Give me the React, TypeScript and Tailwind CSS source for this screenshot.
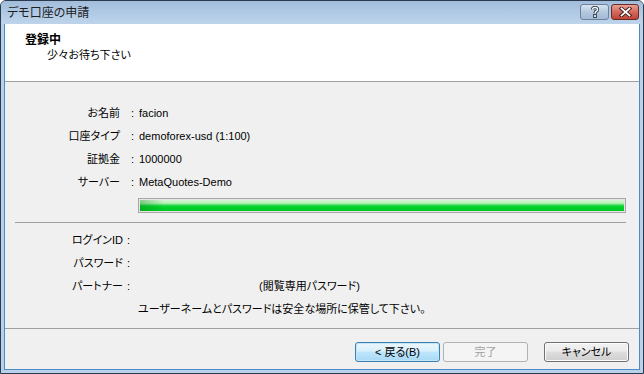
const FONT = '"Liberation Sans", "Noto Sans CJK JP", sans-serif';

function Row({ label, value, colonAt = "upper" }: { label: string; value?: React.ReactNode; colonAt?: "upper" | "lower" }) {
  return (
    <div className="flex h-[23px] items-center whitespace-nowrap leading-[23px]">
      <div className={colonAt === "upper" ? "w-[115px] shrink-0 text-right" : "w-[118px] shrink-0 text-right"}>{label}</div>
      <div className={colonAt === "upper" ? "w-[14px] shrink-0 text-right" : "w-[7px] shrink-0 text-right"}>:</div>
      <div className={colonAt === "upper" ? "w-[5px] shrink-0" : "w-[9px] shrink-0"} />
      <div className="flex-1">{value}</div>
    </div>
  );
}

function WinButton({ children, variant = "normal" }: { children: React.ReactNode; variant?: "default" | "normal" | "disabled" }) {
  const cls =
    variant === "default"
      ? "border-[#3c7fb1] bg-[linear-gradient(#eaf6fd_0%,#d9f0fc_45%,#bee6fd_50%,#a7d9f5_100%)] text-black shadow-[inset_0_0_0_1px_#c4e5f6]"
      : variant === "disabled"
        ? "border-[#adb2b5] bg-[#f4f4f4] text-[#a0a0a0]"
        : "border-[#707070] bg-[linear-gradient(#f2f2f2_0%,#ebebeb_45%,#dddddd_50%,#cfcfcf_100%)] text-black shadow-[inset_0_0_0_1px_#fcfcfc]";
  return (
    <div className={`flex h-[20px] w-[85px] items-center justify-center rounded-[3px] border text-[11px] ${cls}`}>
      {children}
    </div>
  );
}

export default function App() {
  return (
    <div
      className="flex h-[374px] w-[644px] flex-col overflow-hidden rounded-t-[6px] border border-[#2b3a4c] bg-[#b9d1ea] text-[11px] text-black"
      style={{ fontFamily: FONT, fontFeatureSettings: '"palt"' }}
    >
      {/* title bar */}
      <div className="flex h-[23px] shrink-0 items-center bg-[linear-gradient(#a2bddb,#b3cbe5_60%,#bdd4eb)] pl-[6px] pr-[4px]">
        <span className="text-[12px] leading-none text-[#1e1e1e]">デモ口座の申請</span>
        <div className="ml-auto mt-[-1px] flex gap-[2px]">
          <div className="flex h-[16px] w-[29px] items-center justify-center rounded-[3px] border border-[#6e8198] bg-[linear-gradient(#d7e4f2,#b4c8df_50%,#a3bad6)]">
            <svg width="10" height="12" viewBox="0 0 10 12">
              <path d="M2.5 3.5 Q2.5 1.5 5 1.5 Q7.5 1.5 7.5 3.5 Q7.5 5 5.5 5.8 L5 7.5" fill="none" stroke="#2e3b4a" strokeWidth="3.2" />
              <path d="M2.5 3.5 Q2.5 1.5 5 1.5 Q7.5 1.5 7.5 3.5 Q7.5 5 5.5 5.8 L5 7.5" fill="none" stroke="#fff" strokeWidth="1.4" />
              <rect x="3.6" y="8.6" width="2.8" height="2.8" fill="#fff" stroke="#2e3b4a" strokeWidth="1" />
            </svg>
          </div>
          <div className="flex h-[16px] w-[28px] items-center justify-center rounded-[3px] border border-[#6b2a24] bg-[linear-gradient(#e6a094,#d4685b_50%,#c2443a)]">
            <svg width="13" height="10" viewBox="0 0 13 10">
              <path d="M2.5 1.5 L10.5 8.5 M10.5 1.5 L2.5 8.5" stroke="#3a1512" strokeWidth="3.6" strokeLinecap="square" />
              <path d="M2.5 1.5 L10.5 8.5 M10.5 1.5 L2.5 8.5" stroke="#fff" strokeWidth="1.8" strokeLinecap="square" />
            </svg>
          </div>
        </div>
      </div>

      {/* client area */}
      <div className="mx-[3px] mb-[3px] flex flex-1 flex-col border-x border-b border-[#4a8cc4] bg-[#f0f0f0]">
        {/* header */}
        <div className="h-[58px] shrink-0 border-b border-[#a0a0a0] bg-white pl-[20px] pt-[9px]">
          <div className="h-[15px] text-[12px] font-bold leading-[15px]">登録中</div>
          <div className="h-[15px] pl-[22px] leading-[15px]">少々お待ち下さい</div>
        </div>

        {/* body */}
        <div className="flex flex-1 flex-col pt-[20px]">
          <Row label="お名前" value="facion" />
          <Row label="口座タイプ" value="demoforex-usd (1:100)" />
          <Row label="証拠金" value="1000000" />
          <Row label="サーバー" value="MetaQuotes-Demo" />

          <div className="ml-[133px] mt-[4px] h-[15px] w-[488px] border border-[#a7a7a7] bg-[#e6e6e6] p-px">
            <div className="h-full w-full bg-[linear-gradient(#d6f7d6_0%,#b4efb4_30%,#3ddf5a_45%,#00d42a_60%,#00c826_100%)]">
              <div className="h-full w-[24px] bg-[linear-gradient(90deg,rgba(0,120,20,0.35),rgba(0,120,20,0))]" />
            </div>
          </div>

          <div className="ml-[10px] mt-[9px] h-px w-[611px] bg-[#a0a0a0]" />

          <div className="mt-[6px]">
            <Row label="ログインID" colonAt="lower" />
            <Row label="パスワード" colonAt="lower" />
            <Row label="パートナー" colonAt="lower" value={<span className="pl-[120px]">(閲覧専用パスワード)</span>} />
            <div className="flex h-[23px] items-center pl-[133px] leading-[23px]">
              ユーザーネームとパスワードは安全な場所に保管して下さい。
            </div>
          </div>

          <div className="mt-[7px] h-px w-full bg-[#a0a0a0]" />

          <div className="mt-[13px] flex justify-end pr-[10px]">
            <WinButton variant="default">&lt; 戻る(B)</WinButton>
            <div className="w-[3px]" />
            <WinButton variant="disabled">完了</WinButton>
            <div className="w-[16px]" />
            <WinButton>キャンセル</WinButton>
          </div>
        </div>
      </div>
    </div>
  );
}
